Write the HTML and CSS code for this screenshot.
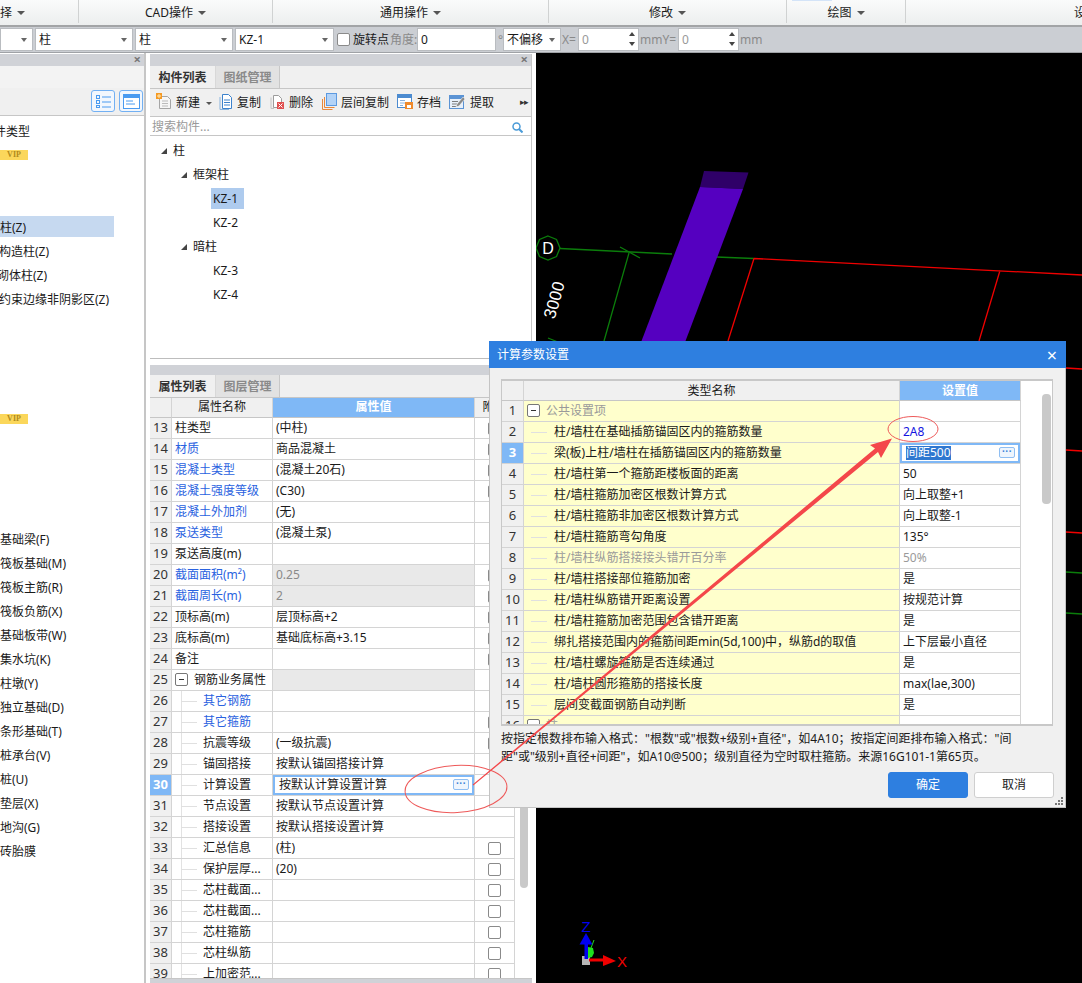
FILE: index.html
```html
<!DOCTYPE html>
<html lang="zh-CN">
<head>
<meta charset="utf-8">
<title>计算参数设置</title>
<link rel="stylesheet" href="styles.css">
</head>
<body>
<div class="app">
  <header class="ribbon">
    <div class="rgroup g1"><span>择</span><i class="drop"></i></div>
    <div class="rgroup g2"><span>CAD操作</span><i class="drop"></i></div>
    <div class="rgroup g3"><span>通用操作</span><i class="drop"></i></div>
    <div class="rgroup g4"><span>修改</span><i class="drop"></i><b class="hover-strip"></b></div>
    <div class="rgroup g5"><span>绘图</span><i class="drop"></i></div>
    <div class="rgroup g6"><span>设</span></div>
  </header>

  <div class="optbar">
    <div class="combo w35"><i class="caret"></i></div>
    <div class="combo w98"><span>柱</span><i class="caret"></i></div>
    <div class="combo w98"><span>柱</span><i class="caret"></i></div>
    <div class="combo w99"><span>KZ-1</span><i class="caret"></i></div>
    <span class="check ck-bar"></span>
    <span class="lbl l-rot">旋转点</span>
    <span class="lbl dim l-ang">角度:</span>
    <div class="field f-ang">0</div>
    <span class="lbl dim l-deg">°</span>
    <div class="combo w59"><span>不偏移</span><i class="caret"></i></div>
    <span class="lbl dim l-x">X=</span>
    <div class="field spin">0<i class="spins"><b></b><b></b></i></div>
    <span class="lbl dim l-mmy">mmY=</span>
    <div class="field spin">0<i class="spins"><b></b><b></b></i></div>
    <span class="lbl dim l-mm">mm</span>
  </div>

  <main class="workspace">
    <aside class="left">
      <div class="panel-head"><span class="closer">×</span></div>
      <div class="left-blank"></div>
      <div class="left-tools">
        <span class="viewbtn">
          <svg width="17" height="15" viewBox="0 0 17 15"><g fill="none" stroke="#4a9bf0"><rect x="1.5" y="1.5" width="3" height="3"/><rect x="1.5" y="6.5" width="3" height="3"/><rect x="1.5" y="11.5" width="3" height="2"/><path d="M7 3h9M7 8h9M7 13h9"/></g></svg>
        </span>
        <span class="viewbtn">
          <svg width="17" height="15" viewBox="0 0 17 15"><rect x=".5" y=".5" width="16" height="14" fill="#fff" stroke="#4a9bf0"/><rect x="1" y="1" width="15" height="3" fill="#4a9bf0"/><path d="M3 7h7M3 10h9" stroke="#4a9bf0"/></svg>
        </span>
      </div>
      <ul class="modlist">
        <li><span class="cut5">件类型</span></li>
        <li><span class="vip">VIP</span></li>
        <li></li>
        <li></li>
        <li class="sel"><span>柱(Z)</span></li>
        <li><span class="cut1">构造柱(Z)</span></li>
        <li><span class="cut3">砌体柱(Z)</span></li>
        <li><span class="cut1">约束边缘非阴影区(Z)</span></li>
        <li></li><li></li><li></li><li></li>
        <li><span class="vip">VIP</span></li>
        <li></li><li></li><li></li><li></li>
        <li>基础梁(F)</li>
        <li>筏板基础(M)</li>
        <li>筏板主筋(R)</li>
        <li>筏板负筋(X)</li>
        <li>基础板带(W)</li>
        <li>集水坑(K)</li>
        <li>柱墩(Y)</li>
        <li>独立基础(D)</li>
        <li>条形基础(T)</li>
        <li>桩承台(V)</li>
        <li>桩(U)</li>
        <li>垫层(X)</li>
        <li>地沟(G)</li>
        <li>砖胎膜</li>
      </ul>
    </aside>

    <section class="middle">
      <div class="comp-panel">
        <div class="panel-head"><span class="closer">×</span></div>
        <div class="tabs"><span class="tab on">构件列表</span><span class="tab">图纸管理</span></div>
        <div class="tools">
          <span class="tool t-new">
            <svg width="16" height="17" viewBox="0 0 16 17"><path d="M3.5 3.5h8l3 3v9h-11z" fill="#f6f6f6" stroke="#a5a5a5"/><path d="M6 8h6M6 10.500h6M6 13h6" stroke="#bbb"/><rect x="0" y="0" width="6" height="6" fill="#f59a23"/><path d="M1 3h4M3 1v4" stroke="#ffe9b8"/></svg>
            新建<i class="drop small"></i>
          </span>
          <span class="tool t-copy">
            <svg width="14" height="17" viewBox="0 0 14 17"><path d="M3.500 1.500h6l3 3v11h-9z" fill="#fff" stroke="#3c82cc"/><path d="M1 4v12.500h9" fill="none" stroke="#8ab4de"/><path d="M5 7h6M5 9.500h6M5 12h6" stroke="#3c82cc"/></svg>
            复制
          </span>
          <span class="tool t-del">
            <svg width="15" height="17" viewBox="0 0 15 17"><path d="M3.500 2.500h5l3 3v9h-8z" fill="#fff" stroke="#9c9c9c"/><path d="M1 4.500v11h3" fill="none" stroke="#c4c4c4"/><rect x="7" y="9" width="7" height="7" fill="#e05050"/><path d="M8.500 10.500l4 4m0-4l-4 4" stroke="#fff"/></svg>
            删除
          </span>
          <span class="tool t-layer">
            <svg width="15" height="17" viewBox="0 0 15 17"><path d="M.5 6v10.500h10M2.500 4v10.500h10" fill="none" stroke="#e8873a"/><rect x="4.500" y=".5" width="10" height="12" fill="#b3d3f7" stroke="#5d9ae0"/></svg>
            层间复制
          </span>
          <span class="tool t-save">
            <svg width="16" height="17" viewBox="0 0 16 17"><rect x=".5" y="1.500" width="14" height="13" fill="#fff" stroke="#4c8bd0"/><rect x="1" y="2" width="13" height="3" fill="#4c8bd0"/><path d="M3 7.500h5M3 10h5M3 12.500h3" stroke="#89b2de"/><rect x="8" y="9" width="8" height="7" fill="#ef8a2c"/><rect x="10" y="12" width="4" height="3" fill="#fff"/></svg>
            存档
          </span>
          <span class="tool t-pick">
            <svg width="17" height="17" viewBox="0 0 17 17"><rect x=".5" y="2.500" width="14" height="13" fill="#e8f0fa" stroke="#5b93d4"/><rect x="1" y="3" width="13" height="3" fill="#5b93d4"/><path d="M3 8.500h6M3 11h5M3 13.500h4" stroke="#7d7d7d"/><path d="M7 14l1-3 6-7 2 2-6 7z" fill="#8a8a8a" stroke="#fff" stroke-width=".5"/></svg>
            提取
          </span>
          <span class="more">▸▸</span>
        </div>
        <div class="search">
          <span>搜索构件...</span>
          <svg width="11" height="11" viewBox="0 0 11 11"><circle cx="4.500" cy="4.500" r="3.500" fill="none" stroke="#4a9bd8" stroke-width="1.500"/><path d="M7 7l3.500 3.500" stroke="#4a9bd8" stroke-width="2"/></svg>
        </div>
        <ul class="tree">
          <li class="lv0"><i class="tri"></i>柱</li>
          <li class="lv1"><i class="tri"></i>框架柱</li>
          <li class="lv2"><span class="picked">KZ-1</span></li>
          <li class="lv2"><span>KZ-2</span></li>
          <li class="lv1"><i class="tri"></i>暗柱</li>
          <li class="lv2"><span>KZ-3</span></li>
          <li class="lv2"><span>KZ-4</span></li>
        </ul>
      </div>

      <div class="prop-panel">
        <div class="panel-head"></div>
        <div class="tabs"><span class="tab on">属性列表</span><span class="tab">图层管理</span></div>
        <div class="prop-body">
          <table class="grid props">
            <colgroup><col class="c-n"><col class="c-name"><col class="c-val"><col class="c-chk"></colgroup>
            <thead><tr><th></th><th>属性名称</th><th class="active">属性值</th><th>附加</th></tr></thead>
            <tbody>
              <tr><td class="n">13</td><td>柱类型</td><td>(中柱)</td><td class="k"><span class="check"></span></td></tr>
              <tr><td class="n">14</td><td class="link">材质</td><td>商品混凝土</td><td class="k"><span class="check"></span></td></tr>
              <tr><td class="n">15</td><td class="link">混凝土类型</td><td>(混凝土20石)</td><td class="k"><span class="check"></span></td></tr>
              <tr><td class="n">16</td><td class="link">混凝土强度等级</td><td>(C30)</td><td class="k"><span class="check"></span></td></tr>
              <tr><td class="n">17</td><td class="link">混凝土外加剂</td><td>(无)</td><td class="k"></td></tr>
              <tr><td class="n">18</td><td class="link">泵送类型</td><td>(混凝土泵)</td><td class="k"></td></tr>
              <tr><td class="n">19</td><td>泵送高度(m)</td><td></td><td class="k"></td></tr>
              <tr><td class="n">20</td><td class="link">截面面积(m²)</td><td class="ro">0.25</td><td class="k"><span class="check"></span></td></tr>
              <tr><td class="n">21</td><td class="link">截面周长(m)</td><td class="ro">2</td><td class="k"><span class="check"></span></td></tr>
              <tr><td class="n">22</td><td>顶标高(m)</td><td>层顶标高+2</td><td class="k"><span class="check"></span></td></tr>
              <tr><td class="n">23</td><td>底标高(m)</td><td>基础底标高+3.15</td><td class="k"><span class="check"></span></td></tr>
              <tr><td class="n">24</td><td>备注</td><td></td><td class="k"><span class="check"></span></td></tr>
              <tr><td class="n">25</td><td class="nowrap"><span class="box"></span>钢筋业务属性</td><td class="ro"></td><td class="k"></td></tr>
              <tr><td class="n">26</td><td class="tw link"><i class="twig"></i>其它钢筋</td><td></td><td class="k"></td></tr>
              <tr><td class="n">27</td><td class="tw link"><i class="twig"></i>其它箍筋</td><td></td><td class="k"><span class="check"></span></td></tr>
              <tr><td class="n">28</td><td class="tw"><i class="twig"></i>抗震等级</td><td>(一级抗震)</td><td class="k"><span class="check"></span></td></tr>
              <tr><td class="n">29</td><td class="tw"><i class="twig"></i>锚固搭接</td><td>按默认锚固搭接计算</td><td class="k"></td></tr>
              <tr class="cur"><td class="n">30</td><td class="tw"><i class="twig"></i>计算设置</td><td class="editing"><span class="editrow">按默认计算设置计算<span class="dots">···</span></span></td><td class="k"></td></tr>
              <tr><td class="n">31</td><td class="tw"><i class="twig"></i>节点设置</td><td>按默认节点设置计算</td><td class="k"></td></tr>
              <tr><td class="n">32</td><td class="tw"><i class="twig"></i>搭接设置</td><td>按默认搭接设置计算</td><td class="k"></td></tr>
              <tr><td class="n">33</td><td class="tw"><i class="twig"></i>汇总信息</td><td>(柱)</td><td class="k"><span class="check"></span></td></tr>
              <tr><td class="n">34</td><td class="tw"><i class="twig"></i>保护层厚...</td><td>(20)</td><td class="k"><span class="check"></span></td></tr>
              <tr><td class="n">35</td><td class="tw"><i class="twig"></i>芯柱截面...</td><td></td><td class="k"><span class="check"></span></td></tr>
              <tr><td class="n">36</td><td class="tw"><i class="twig"></i>芯柱截面...</td><td></td><td class="k"><span class="check"></span></td></tr>
              <tr><td class="n">37</td><td class="tw"><i class="twig"></i>芯柱箍筋</td><td></td><td class="k"><span class="check"></span></td></tr>
              <tr><td class="n">38</td><td class="tw"><i class="twig"></i>芯柱纵筋</td><td></td><td class="k"><span class="check"></span></td></tr>
              <tr><td class="n">39</td><td class="tw"><i class="twig"></i>上加密范...</td><td></td><td class="k"><span class="check"></span></td></tr>
            </tbody>
          </table>
          <div class="vscroll"><span class="thumb prop-thumb"></span></div>
        </div>
      </div>
    </section>

    <section class="canvas">
      <svg class="scene" width="546" height="930" viewBox="536 53 546 930">
        <g fill="none" stroke="#0b7d0b" stroke-width="1.300">
          <path d="M560 248.500L672 254M716 257L754 258.500"/>
          <path d="M629 253L604 341M620 247L640 258"/>
          <path d="M548 236l8.500 3.500 3.500 8.500-3.500 8.500-8.500 3.500-8.500-3.500-3.500-8.500 3.500-8.500z"/>
          <path d="M548 338l8.500 3.500 3.500 8.500"/>
          <path d="M1066 572L1082 573M1066 613L1082 614"/>
        </g>
        <g fill="none" stroke="#f00000" stroke-width="1.300">
          <path d="M754 258.500L1082 275M754 258.500L728 341M1000 270.500L979 341"/>
          <path d="M1066 368L1082 369M1066 450L1082 451M1066 532L1082 533"/>
        </g>
        <polygon points="704,171 748.500,172.500 743,189 700,187" fill="#2f0068"/>
        <polygon points="700,187 743,189 684,345 640,345" fill="#5500c0"/>
        <text x="548" y="254" class="tx-d">D</text>
        <text x="554" y="306" class="tx-dim" transform="rotate(-74 554 300)">3000</text>
        <g>
          <rect x="582" y="956" width="8" height="9" fill="#b4b4b4"/>
          <path d="M588 947l5 1 1 5-2 4-4 1z" fill="#1fe01f"/>
          <path d="M591 948l3-8" stroke="#1fe01f"/>
          <path d="M584.500 944h3.500v15h-3.500z" fill="#0000f0"/>
          <path d="M586 933l6.500 11.500h-13z" fill="#0000f0"/>
          <path d="M589 958.500h14v3h-14z" fill="#f00000"/>
          <path d="M603 955l13 6-13 5z" fill="#f00000"/>
          <text x="586" y="932" class="tx-z">Z</text>
          <text x="622" y="967" class="tx-x">X</text>
        </g>
      </svg>
    </section>
  </main>

  <div class="dialog">
    <div class="dlg-title"><span>计算参数设置</span><span class="dlg-x">×</span></div>
    <div class="dlg-grid">
      <table class="grid params">
        <colgroup><col class="p-n"><col class="p-name"><col class="p-val"></colgroup>
        <thead><tr><th></th><th>类型名称</th><th class="active">设置值</th></tr></thead>
        <tbody>
          <tr><td class="n">1</td><td class="y dimtxt"><span class="box"></span>公共设置项</td><td></td></tr>
          <tr><td class="n">2</td><td class="y tw2"><i class="twig"></i>柱/墙柱在基础插筋锚固区内的箍筋数量</td><td class="blue">2A8</td></tr>
          <tr class="cur"><td class="n">3</td><td class="y tw2"><i class="twig"></i>梁(板)上柱/墙柱在插筋锚固区内的箍筋数量</td><td class="editing"><span class="editrow"><mark>间距500</mark><span class="dots">···</span></span></td></tr>
          <tr><td class="n">4</td><td class="y tw2"><i class="twig"></i>柱/墙柱第一个箍筋距楼板面的距离</td><td>50</td></tr>
          <tr><td class="n">5</td><td class="y tw2"><i class="twig"></i>柱/墙柱箍筋加密区根数计算方式</td><td>向上取整+1</td></tr>
          <tr><td class="n">6</td><td class="y tw2"><i class="twig"></i>柱/墙柱箍筋非加密区根数计算方式</td><td>向上取整-1</td></tr>
          <tr><td class="n">7</td><td class="y tw2"><i class="twig"></i>柱/墙柱箍筋弯勾角度</td><td>135°</td></tr>
          <tr><td class="n">8</td><td class="y tw2 dimtxt"><i class="twig"></i>柱/墙柱纵筋搭接接头错开百分率</td><td class="dimtxt">50%</td></tr>
          <tr><td class="n">9</td><td class="y tw2"><i class="twig"></i>柱/墙柱搭接部位箍筋加密</td><td>是</td></tr>
          <tr><td class="n">10</td><td class="y tw2"><i class="twig"></i>柱/墙柱纵筋错开距离设置</td><td>按规范计算</td></tr>
          <tr><td class="n">11</td><td class="y tw2"><i class="twig"></i>柱/墙柱箍筋加密范围包含错开距离</td><td>是</td></tr>
          <tr><td class="n">12</td><td class="y tw2"><i class="twig"></i>绑扎搭接范围内的箍筋间距min(5d,100)中，纵筋d的取值</td><td>上下层最小直径</td></tr>
          <tr><td class="n">13</td><td class="y tw2"><i class="twig"></i>柱/墙柱螺旋箍筋是否连续通过</td><td>是</td></tr>
          <tr><td class="n">14</td><td class="y tw2"><i class="twig"></i>柱/墙柱圆形箍筋的搭接长度</td><td>max(lae,300)</td></tr>
          <tr><td class="n">15</td><td class="y tw2 end"><i class="twig"></i>层间变截面钢筋自动判断</td><td>是</td></tr>
          <tr><td class="n">16</td><td class="y dimtxt"><span class="box"></span>柱</td><td></td></tr>
        </tbody>
      </table>
      <div class="vscroll dlg-scroll"><span class="thumb dlg-thumb"></span></div>
    </div>
    <p class="hint">按指定根数排布输入格式："根数"或"根数+级别+直径"，如4A10；按指定间距排布输入格式："间距"或"级别+直径+间距"，如A10@500；级别直径为空时取柱箍筋。来源16G101-1第65页。</p>
    <div class="dlg-actions">
      <button class="btn primary">确定</button>
      <button class="btn">取消</button>
    </div>
    <svg class="grip" width="9" height="9" viewBox="0 0 9 9"><path d="M6 0h2v2H6zM3 3h2v2H3zM6 3h2v2H6zM0 6h2v2H0zM3 6h2v2H3zM6 6h2v2H6z" fill="#777"/></svg>
  </div>

  <svg class="marks" width="1082" height="983" viewBox="0 0 1082 983">
    <ellipse cx="456" cy="789" rx="51" ry="23.500" transform="rotate(-3 456 789)" fill="none" stroke="#ee5a5a"/>
    <ellipse cx="913" cy="429" rx="25" ry="12.500" fill="none" stroke="#ee5a5a"/>
    <polygon points="473.300,785.500 472.700,784.500 875,448.500 870,445 892,438.500 881,458 878,452" fill="#f4474a"/>
  </svg>
</div>
</body>
</html>
```
FILE: styles.css
```css
* { box-sizing: border-box; }
html, body { margin: 0; padding: 0; background: #fff; }
body { font: 12px/1.2 "Noto Sans", "Noto Sans CJK SC", sans-serif; color: #1a1a1a; }
ul { list-style: none; margin: 0; padding: 0; }
i { font-style: normal; }

.app { position: relative; width: 1082px; height: 983px; overflow: hidden; display: flex; flex-direction: column; }

/* ribbon */
.ribbon { height: 27px; flex: none; display: flex; background: linear-gradient(#fafbfb, #eceeee); border-bottom: 2px solid #a2a4a6; }
.rgroup { position: relative; height: 23px; padding-top: 3px; display: flex; align-items: center; justify-content: center; gap: 5px; border-right: 1px solid #d0d2d2; font-size: 12px; }
.g1 { width: 79px; justify-content: flex-start; }
.g2 { width: 194px; }
.g3 { width: 276px; }
.g4 { width: 238px; }
.g5 { width: 119px; }
.g6 { flex: 1; border: 0; justify-content: flex-start; padding-left: 168px; overflow: hidden; white-space: nowrap; }
.drop { width: 0; height: 0; border: 4px solid transparent; border-top: 4px solid #555; border-bottom: 0; }
.drop.small { border-width: 3px; border-top-color: #555; border-bottom: 0; margin-left: 2px; }
.hover-strip { position: absolute; right: -46px; top: -1px; width: 40px; height: 2px; background: #d4e4f8; }

/* option bar */
.optbar { height: 26px; flex: none; display: flex; align-items: center; background: #cbced3; border-bottom: 1px solid #9fa2a6; gap: 2px; overflow: hidden; white-space: nowrap; }
.combo { position: relative; height: 23px; background: #fff; border: 1px solid #b9bcc0; display: flex; align-items: center; padding: 2px 0 0 3px; }
.w35 { width: 33px; } .w98 { width: 98px; } .w99 { width: 99px; } .w59 { width: 58px; }
.caret { position: absolute; right: 5px; top: 9px; border: 3.500px solid transparent; border-top: 4px solid #666; border-bottom: 0; }
.check { display: inline-block; width: 13px; height: 13px; border: 1px solid #8a8a8a; border-radius: 2px; background: #fff; }
.ck-bar { margin-left: 1px; }
.lbl { display: block; padding-top: 2px; }
.dim { color: #8a8a8a; }
.l-rot { width: 36px; margin-left: 1px; }
.l-ang { width: 26px; margin-left: -1px; }
.field { height: 23px; background: #fff; border: 1px solid #b9bcc0; display: flex; align-items: center; padding: 2px 0 0 3px; position: relative; }
.f-ang { width: 79px; margin-left: -1px; }
.l-deg { width: 3px; }
.l-x { width: 14px; margin-left: -1px; }
.spin { width: 61px; color: #999; }
.l-mmy { width: 36px; margin-left: -1px; }
.l-mm { margin-left: -1px; }
.spins { position: absolute; right: 3px; top: 3px; display: flex; flex-direction: column; gap: 6px; }
.spins b { width: 0; height: 0; border: 3px solid transparent; border-bottom: 4px solid #444; border-top: 0; }
.spins b + b { border-bottom: 0; border-top: 4px solid #444; }

/* workspace */
.workspace { flex: 1; display: flex; min-height: 0; background: #fff; }
.panel-head { position: relative; height: 12px; flex: none; background: #d0d2d7; }
.closer { position: absolute; right: 3px; top: -3px; color: #777; font-size: 13px; font-weight: 700; line-height: 16px; }

.left { width: 146px; flex: none; border-right: 2px solid #c6c6c6; overflow: hidden; display: flex; flex-direction: column; }
.left .panel-head { margin-top: 1px; }
.left-blank { height: 22px; background: #f3f3f3; flex: none; }
.left-tools { height: 28px; flex: none; display: flex; justify-content: flex-end; gap: 4px; padding: 2px 1px 0 0; background: #f0f0f0; border-bottom: 1px solid #c6c6c6; }
.viewbtn { width: 24px; height: 22px; border: 1px solid #72b0f3; border-radius: 3px; background: #f2f7fd; display: flex; align-items: center; justify-content: center; }
.modlist { padding-top: 4px; }
.modlist li { height: 24px; line-height: 24px; white-space: nowrap; }
.modlist .sel { position: relative; z-index: 0; }
.modlist .sel::before { content: ""; position: absolute; z-index: -1; left: 0; top: 0; width: 114px; height: 21px; background: #c6d9f0; }
.cut5 { margin-left: -6px; }
.cut3 { margin-left: -3px; }
.cut1 { margin-left: -1px; }
.vip { display: inline-block; width: 28px; height: 10px; margin-top: 6px; background: #fbd75b; color: #b08a1c; font: 700 8px/10px "Liberation Serif", serif; text-align: center; vertical-align: top; }

.middle { width: 382px; flex: none; margin: 0 4px 0 4px; display: flex; flex-direction: column; }
.comp-panel { height: 305px; flex: none; border-bottom: 1px solid #bdbdbd; border-right: 1px solid #c6c6c6; display: flex; flex-direction: column; margin-top: 1px; }
.tabs { height: 23px; flex: none; display: flex; background: #f0f0f0; border-bottom: 1px solid #c6c6c6; }
.tab { width: 65px; text-align: center; line-height: 24px; background: #e2e2e2; color: #8a8a8a; font-weight: 700; border-left: 1px solid #d8d8d8; border-right: 1px solid #c8c8c8; }
.tab.on { background: #f0f0f0; color: #333; border: 0; }
.tools { height: 28px; flex: none; display: flex; align-items: center; background: #f0f0f0; border-bottom: 1px solid #c6c6c6; padding: 2px 0 0 6px; position: relative; white-space: nowrap; }
.tool { display: flex; align-items: center; gap: 4px; }
.tool svg { margin-top: -3px; }
.t-copy { margin-left: 7px; }
.t-del { margin-left: 9px; }
.t-layer { margin-left: 9px; }
.t-save { margin-left: 8px; }
.t-pick { margin-left: 8px; }
.more { position: absolute; right: 3px; top: 8px; font-size: 9px; color: #333; letter-spacing: -1px; }
.search { height: 19px; flex: none; display: flex; align-items: center; justify-content: space-between; padding: 2px 8px 0 2px; border-bottom: 1px solid #c6c6c6; color: #9a9a9a; background: #fff; }
.tree { padding-top: 3px; background: #fff; flex: 1; }
.tree li { height: 24px; line-height: 24px; position: relative; }
.lv0 { padding-left: 23px; }
.lv1 { padding-left: 43px; }
.lv2 { padding-left: 61px; }
.tri { position: absolute; top: 9px; width: 6px; height: 6px; background: #444; clip-path: polygon(100% 0, 100% 100%, 0 100%); }
.lv0 .tri { left: 11px; }
.lv1 .tri { left: 31px; }
.lv2 span { display: inline-block; height: 21px; line-height: 21px; padding: 0 2px; }
.picked { background: #aecbee; width: 33px; }

.prop-panel { margin-top: 6px; flex: 1; min-height: 0; display: flex; flex-direction: column; background: #d0d2d7; }
.prop-panel .panel-head { height: 10px; }
.prop-body { flex: 1; min-height: 0; display: flex; background: #fff; overflow: hidden; margin-bottom: 4px; border-bottom: 1px solid #c6c6c6; }

/* grids */
.grid { border-collapse: separate; border-spacing: 0; table-layout: fixed; flex: none; }
.grid th, .grid td { height: 21px; padding: 0 0 0 3px; border-right: 1px solid #d4d4d4; border-bottom: 1px solid #d4d4d4; font-weight: 400; white-space: nowrap; overflow: hidden; text-align: left; background: #fff; }
.grid thead th { height: 20px; text-align: center; background: #f0f0f0; border-bottom: 1px solid #c6c6c6; padding: 0; }
.grid thead th.active { background: #7fb8f6; color: #fff; font-weight: 700; }
.grid td.n { background: #f0f0f0; text-align: center; padding: 0; color: #333; font-size: 13px; }
.grid tr.cur td.n { background: #7fb8f6; color: #fff; font-weight: 700; }
.props { width: 365px; }
.c-n { width: 22px; } .c-name { width: 101px; } .c-val { width: 202px; } .c-chk { width: 40px; }
.props td:nth-child(3) { padding-left: 3px; }
.props .link { color: #2a62e0; }
.props td.ro, .grid td.ro { background: #e9e9e9; color: #8a8a8a; }
.grid td.k { padding: 0 0 0 13px; line-height: 0; }
.box { display: inline-block; position: relative; width: 13px; height: 13px; border: 1px solid #777; border-radius: 2px; background: #fff; vertical-align: -2px; margin: 0 6px 0 0; }
.box::after { content: ""; position: absolute; left: 3px; right: 3px; top: 5px; height: 1px; background: #333; }
.tw { background-image: linear-gradient(#e2e2e2, #e2e2e2) !important; background-size: 1px 100% !important; background-position: 9px 0 !important; background-repeat: no-repeat !important; padding-left: 9px !important; }
.twig { display: inline-block; width: 16px; height: 0; border-top: 1px solid #e0e0e0; vertical-align: middle; margin-right: 6px; }
.editing { padding: 0 !important; }
.editrow { position: relative; display: flex; align-items: center; height: 20px; border: 2px solid #7fb8f6; padding-left: 4px; }
.dots { position: absolute; right: 3px; top: 2px; width: 16px; height: 11px; border: 1px solid #8fbef2; border-radius: 2px; background: #eef5fd; color: #3d82d8; font: 700 10px/8px "Liberation Sans", sans-serif; text-align: center; letter-spacing: 0; }
.vscroll { flex: 1; background: #fff; border-left: 0; padding: 0 4px; }
.thumb { display: block; border-radius: 4px; background: #c9c9c9; }
.prop-thumb { width: 8px; height: 490px; margin-left: 1px; }

/* canvas */
.canvas { flex: 1; background: #000; overflow: hidden; min-width: 0; }
.scene { display: block; }
.tx-d { fill: #fff; font: 16px "Liberation Sans", sans-serif; text-anchor: middle; }
.tx-dim { fill: #fff; font: 17px "Liberation Sans", sans-serif; text-anchor: middle; }
.tx-z { fill: #0000f0; font: 15px "Liberation Sans", sans-serif; text-anchor: middle; }
.tx-x { fill: #f00000; font: 15px "Liberation Sans", sans-serif; text-anchor: middle; }

/* dialog */
.dialog { position: absolute; left: 489px; top: 341px; width: 577px; height: 467px; background: #f0f0f0; border: 1px solid #c4c4c4; border-top: 0; display: flex; flex-direction: column; }
.dlg-title { height: 27px; flex: none; background: #2e7fe0; color: #fff; display: flex; align-items: center; justify-content: space-between; padding: 2px 9px 0 8px; margin: 0 -1px; }
.dlg-x { font-size: 18px; line-height: 18px; margin-top: -2px; }
.dlg-grid { margin: 11px 12px 0 11px; height: 347px; flex: none; border: 2px solid #c8c8c8; border-left-width: 1px; border-right-width: 1px; background: #fff; display: flex; overflow: hidden; }
.params { width: 519px; }
.p-n { width: 22px; } .p-name { width: 376px; } .p-val { width: 121px; }
.params th { padding-top: 2px !important; }
.params td:nth-child(3) { padding-left: 3px; }
.params td:nth-child(2):not(.tw2) { padding-left: 3px; }
.params td.y { background-color: #ffffcc; }
.tw2 { background-image: linear-gradient(#e2e2e2, #e2e2e2); background-size: 1px 100%; background-position: 7px 0; background-repeat: no-repeat; padding-left: 7px !important; }
.tw2.end { background-size: 1px 50%; }
.tw2 .twig { width: 16px; margin-right: 7px; }
.dimtxt { color: #9a9a9a; }
.blue { color: #1414e0; }
mark { background: #2f78d0; color: #fff; }
.dlg-scroll { padding: 13px 0 0 21px; }
.dlg-thumb { width: 9px; height: 110px; }
.hint { margin: 4px 12px 0 11px; height: 36px; font-size: 12px; line-height: 18px; }
.dlg-actions { display: flex; justify-content: flex-end; gap: 6px; padding: 6px 11px 0 0; }
.btn { width: 80px; height: 26px; border: 1px solid #cfcfcf; border-radius: 3px; background: #fff; font: inherit; color: #222; padding: 0; }
.btn.primary { background: #2e7fe0; border-color: #2e7fe0; color: #fff; }
.grip { position: absolute; right: 1px; bottom: 1px; }
.marks { position: absolute; left: 0; top: 0; pointer-events: none; }
```
